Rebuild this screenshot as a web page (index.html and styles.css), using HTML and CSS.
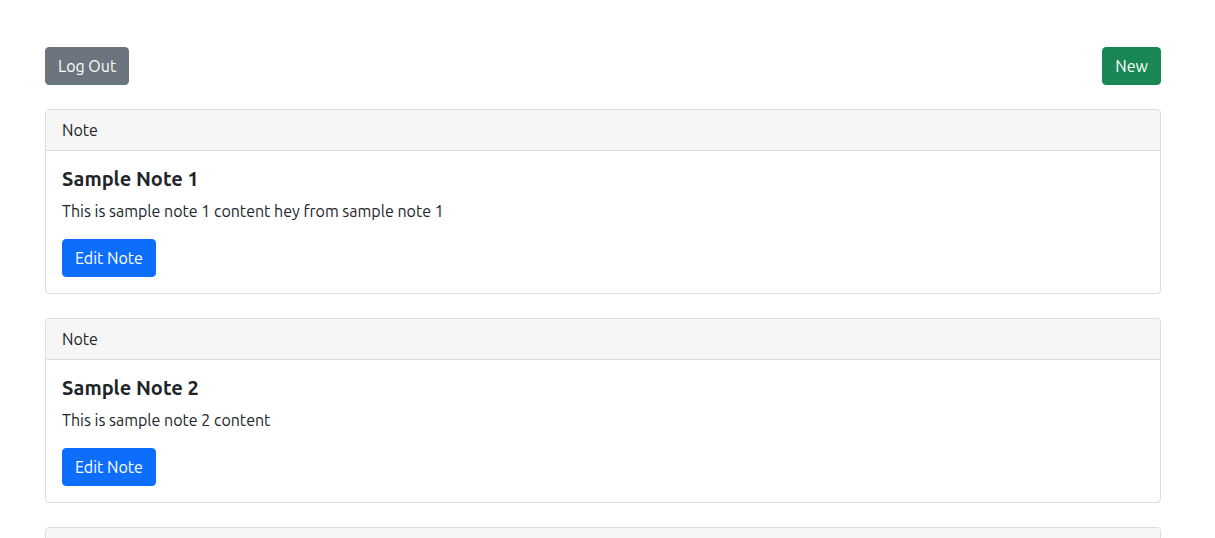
FILE: index.html
```html
<!DOCTYPE html>
<html lang="en">
<head>
<meta charset="utf-8">
<title>Notes</title>
<link rel="stylesheet" href="styles.css">
</head>
<body>
<main class="page">
  <div class="toolbar">
    <button class="btn btn-secondary">Log Out</button>
    <button class="btn btn-success">New</button>
  </div>
  <section class="card">
    <div class="card-header">Note</div>
    <div class="card-body">
      <h5 class="card-title">Sample Note 1</h5>
      <p class="card-text">This is sample note 1 content hey from sample note 1</p>
      <button class="btn btn-primary">Edit Note</button>
    </div>
  </section>
  <section class="card">
    <div class="card-header">Note</div>
    <div class="card-body">
      <h5 class="card-title">Sample Note 2</h5>
      <p class="card-text">This is sample note 2 content</p>
      <button class="btn btn-primary">Edit Note</button>
    </div>
  </section>
  <section class="card">
    <div class="card-header">Note</div>
    <div class="card-body">
      <h5 class="card-title">Sample Note 3</h5>
      <p class="card-text">This is sample note 3 content</p>
      <button class="btn btn-primary">Edit Note</button>
    </div>
  </section>
</main>
</body>
</html>
```
FILE: styles.css
```css
* { box-sizing: border-box; }
html, body { margin: 0; padding: 0; background: #fff; }
body {
  font-family: Ubuntu, Lato, "Liberation Sans", sans-serif;
  font-size: 16px;
  line-height: 24px;
  color: #212529;
}
.page {
  width: 1116px;
  margin-left: 45px;
  padding-top: 47px;
}
.toolbar {
  display: flex;
  justify-content: space-between;
  margin-bottom: 24px;
}
.btn {
  font-family: inherit;
  font-size: 16px;
  line-height: 24px;
  padding: 6px 12px;
  border: 1px solid transparent;
  border-radius: 4px;
  color: #fff;
  cursor: pointer;
}
.btn-secondary { background: #6c757d; border-color: #6c757d; }
.btn-success { background: #198754; border-color: #198754; }
.btn-primary { background: #0d6efd; border-color: #0d6efd; }
.card {
  border: 1px solid #dcdcdc;
  border-radius: 4px;
  margin-bottom: 24px;
  overflow: hidden;
}
.card-header {
  background: #f6f6f6;
  padding: 8px 16px;
  border-bottom: 1px solid #dcdcdc;
}
.card-body { padding: 16px; }
.card-title {
  margin: 0 0 8px;
  font-size: 20px;
  line-height: 24px;
  font-weight: 600;
}
.card-text { margin: 0 0 16px; }
```
